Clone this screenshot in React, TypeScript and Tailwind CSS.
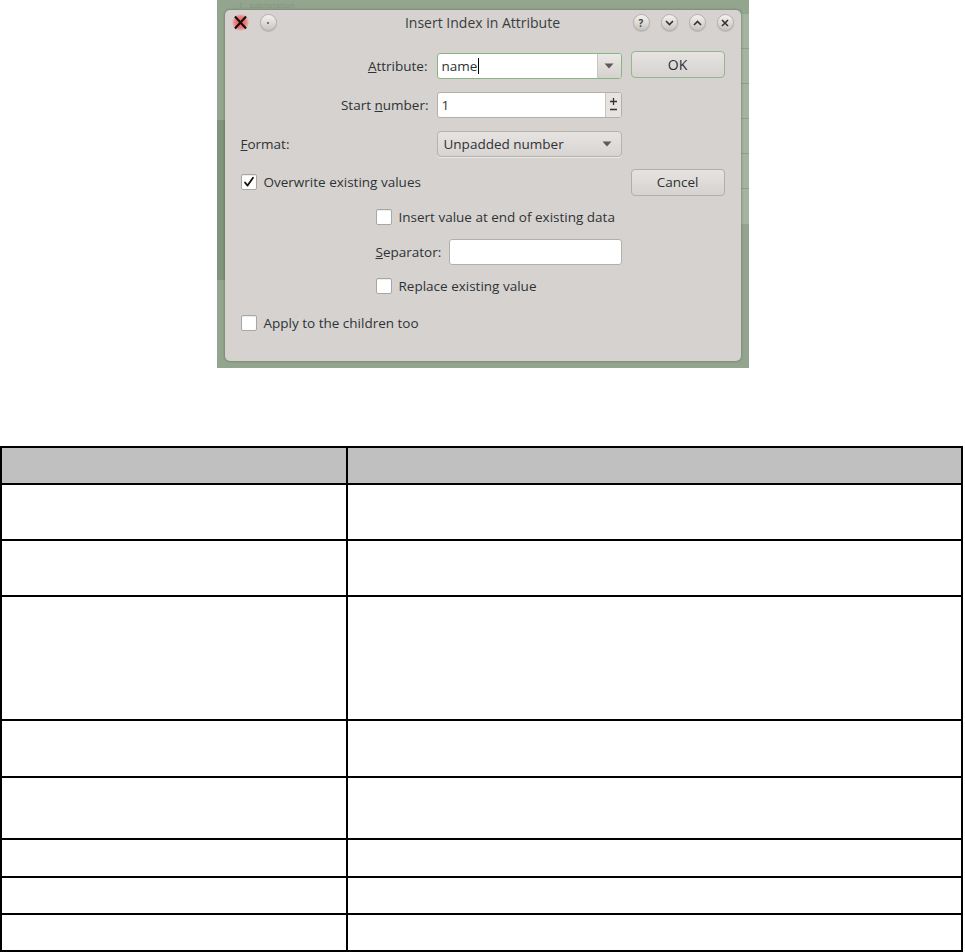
import React from "react";

const font = { fontFamily: '"Open Sans", "Noto Sans", sans-serif' };

function Check({ checked = false }: { checked?: boolean }) {
  return (
    <span className="flex h-[16px] w-[16px] shrink-0 items-center justify-center rounded-[2px] border border-[#a9a6a3] bg-white shadow-[inset_0_1px_1px_rgba(0,0,0,0.08)]">
      {checked && (
        <svg width="12" height="12" viewBox="0 0 12 12">
          <path d="M2 6.5 L4.6 9.6 L10 1.8" fill="none" stroke="#111" strokeWidth="1.8" strokeLinecap="round" strokeLinejoin="round" />
        </svg>
      )}
    </span>
  );
}

function DownTri() {
  return (
    <svg width="10" height="6" viewBox="0 0 10 6">
      <path d="M0.5 0.5 H9.5 L5 5.5 Z" fill="#5a5a5a" />
    </svg>
  );
}

function TitleBtn({ children }: { children: React.ReactNode }) {
  return (
    <span className="flex h-[17px] w-[17px] items-center justify-center rounded-full border border-[#b4b0ac] bg-gradient-to-b from-[#f4f2f0] to-[#c9c5c1] shadow-[0_1px_1px_rgba(0,0,0,0.15)]">
      {children}
    </span>
  );
}

export default function App() {
  return (
    <div className="flex min-h-[952px] w-[965px] flex-col items-center bg-white" style={font}>
      {/* Screenshot of dialog */}
      <div className="relative h-[368px] w-[532px] overflow-hidden bg-[#93a58f]">
        {/* faint background bits */}
        <div className="absolute left-[22px] top-0 text-[8px] leading-[9px] text-[#82947e]">1 . subnotation</div>
        <div className="absolute right-0 top-[14px] flex h-[210px] w-[14px] flex-col border-l border-[#a9b9a5] bg-[#a3b49f]">
          <div className="h-[35px] border-b border-[#8ea08a]" />
          <div className="h-[35px] border-b border-[#8ea08a]" />
          <div className="h-[35px] border-b border-[#8ea08a]" />
          <div className="h-[35px] border-b border-[#8ea08a]" />
          <div className="h-[35px] border-b border-[#8ea08a]" />
        </div>
        <div className="absolute left-0 top-[120px] h-[160px] w-[8px] bg-[#7f947c]" />

        {/* window */}
        <div className="relative ml-[8px] mt-[10px] flex h-[351px] w-[516px] flex-col rounded-[5px] bg-[#d6d2cf] text-[13.5px] text-[#2e3236] shadow-[0_0_3px_rgba(0,0,0,0.35)]">
          {/* title bar */}
          <div className="flex h-[25px] items-center px-[7px]">
            <div className="flex w-[110px] items-center gap-[11px]">
              <span className="relative flex h-[17px] w-[17px] items-center justify-center">
                <span className="absolute inset-0 rounded-full bg-[radial-gradient(circle,#ff5a5a_0%,#f07a7a_45%,rgba(240,120,120,0)_75%)]" />
                <svg width="15" height="15" viewBox="0 0 15 15" className="relative">
                  <path d="M2 1.5 L13 13.5 M13 1.5 L2 13.5" stroke="#111" strokeWidth="2.2" />
                </svg>
              </span>
              <TitleBtn>
                <span className="h-[2px] w-[2px] rounded-full bg-[#555]" />
              </TitleBtn>
            </div>
            <div className="flex-1 text-center text-[14px] text-[#3a3d40]">Insert Index in Attribute</div>
            <div className="flex w-[110px] items-center justify-end gap-[11px]">
              <TitleBtn>
                <span className="text-[10px] font-bold leading-none text-[#444]">?</span>
              </TitleBtn>
              <TitleBtn>
                <svg width="9" height="6" viewBox="0 0 9 6"><path d="M1 1 L4.5 4.5 L8 1" fill="none" stroke="#333" strokeWidth="1.6" /></svg>
              </TitleBtn>
              <TitleBtn>
                <svg width="9" height="6" viewBox="0 0 9 6"><path d="M1 5 L4.5 1.5 L8 5" fill="none" stroke="#333" strokeWidth="1.6" /></svg>
              </TitleBtn>
              <TitleBtn>
                <svg width="8" height="8" viewBox="0 0 8 8"><path d="M1 1 L7 7 M7 1 L1 7" stroke="#333" strokeWidth="1.6" /></svg>
              </TitleBtn>
            </div>
          </div>

          {/* body */}
          <div className="flex pl-[16px] pr-[16px]">
            {/* left form */}
            <div className="flex w-[381px] flex-col">
              {/* Attribute */}
              <div className="mt-[18px] flex h-[26px] items-center">
                <span className="w-[188px] pr-[1px] text-right"><u>A</u>ttribute:</span>
                <div className="ml-[8px] flex h-[26px] w-[185px] items-stretch overflow-hidden rounded-[3px] border border-[#88b584] bg-white">
                  <div className="flex flex-1 items-center pl-[4px]">
                    name<span className="ml-[1px] h-[16px] w-[1px] bg-black" />
                  </div>
                  <div className="flex w-[24px] items-center justify-center border-l border-[#c9c5c1] bg-gradient-to-b from-[#ebe8e5] to-[#d5d1ce]">
                    <DownTri />
                  </div>
                </div>
              </div>
              {/* Start number */}
              <div className="mt-[13px] flex h-[26px] items-center">
                <span className="w-[188px] text-right">Start <u>n</u>umber:</span>
                <div className="ml-[8px] flex h-[26px] w-[185px] items-stretch overflow-hidden rounded-[3px] border border-[#b3afab] bg-white">
                  <div className="flex flex-1 items-center pl-[4px]">1</div>
                  <div className="flex w-[16px] flex-col items-center justify-center gap-[1px] border-l border-[#c9c5c1] bg-[#e6e3e0]">
                    <svg width="7" height="7" viewBox="0 0 7 7"><path d="M0 3.5 H7 M3.5 0 V7" stroke="#333" strokeWidth="1.3" /></svg>
                    <svg width="7" height="7" viewBox="0 0 7 7"><path d="M0 3.5 H7" stroke="#333" strokeWidth="1.3" /></svg>
                  </div>
                </div>
              </div>
              {/* Format */}
              <div className="mt-[13px] flex h-[26px] items-center">
                <span className="w-[196px]"><u>F</u>ormat:</span>
                <div className="flex h-[26px] w-[185px] items-center justify-between rounded-[4px] border border-[#b6b2ae] bg-gradient-to-b from-[#e6e3e0] to-[#d8d4d1] pl-[6px] pr-[9px] shadow-[0_1px_0_rgba(255,255,255,0.5)]">
                  <span>Unpadded number</span>
                  <DownTri />
                </div>
              </div>
              {/* Overwrite */}
              <div className="mt-[15px] flex h-[20px] items-center gap-[7px]">
                <Check checked />
                <span>Overwrite existing values</span>
              </div>
              {/* Insert value */}
              <div className="mt-[15px] flex h-[20px] items-center gap-[7px] pl-[135px]">
                <Check />
                <span>Insert value at end of existing data</span>
              </div>
              {/* Separator */}
              <div className="mt-[12px] flex h-[26px] items-center pl-[135px]">
                <span className="w-[73px]"><u>S</u>eparator:</span>
                <div className="h-[26px] w-[173px] rounded-[3px] border border-[#b3afab] bg-white" />
              </div>
              {/* Replace */}
              <div className="mt-[11px] flex h-[20px] items-center gap-[7px] pl-[135px]">
                <Check />
                <span>Replace existing value</span>
              </div>
              {/* Apply */}
              <div className="mt-[17px] flex h-[20px] items-center gap-[7px]">
                <Check />
                <span>Apply to the children too</span>
              </div>
            </div>
            {/* buttons */}
            <div className="ml-[9px] flex w-[94px] flex-col">
              <div className="mt-[16px] flex h-[27px] items-center justify-center rounded-[4px] border border-[#8fb88b] bg-gradient-to-b from-[#e6e3e0] to-[#d6d2cf] text-[14px]">OK</div>
              <div className="mt-[91px] flex h-[27px] items-center justify-center rounded-[4px] border border-[#b2aeaa] bg-gradient-to-b from-[#e6e3e0] to-[#d6d2cf]">Cancel</div>
            </div>
          </div>
        </div>
      </div>

      {/* Table */}
      <table className="mt-[78px] w-[963px] self-start border-collapse" style={{ fontFamily: '"Liberation Sans", Arial, sans-serif' }}>
        <tbody>
          <tr className="h-[37px] bg-[#c0c0c0]">
            <td className="w-[346px] border-2 border-black" />
            <td className="border-2 border-black" />
          </tr>
          {[56, 56, 124, 57, 62, 38, 37, 37].map((h, i) => (
            <tr key={i} style={{ height: h }}>
              <td className="border-2 border-black" />
              <td className="border-2 border-black" />
            </tr>
          ))}
        </tbody>
      </table>
    </div>
  );
}
